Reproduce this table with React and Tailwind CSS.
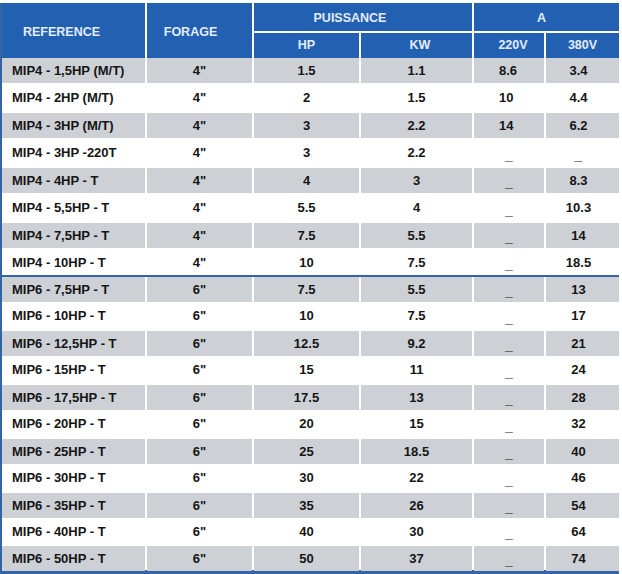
import React from 'react';

const rows = [
  ['MIP4 - 1,5HP (M/T)', '4"', '1.5', '1.1', '8.6', '3.4'],
  ['MIP4 - 2HP (M/T)', '4"', '2', '1.5', '10', '4.4'],
  ['MIP4 - 3HP (M/T)', '4"', '3', '2.2', '14', '6.2'],
  ['MIP4 - 3HP -220T', '4"', '3', '2.2', '_', '_'],
  ['MIP4 - 4HP - T', '4"', '4', '3', '_', '8.3'],
  ['MIP4 - 5,5HP - T', '4"', '5.5', '4', '_', '10.3'],
  ['MIP4 - 7,5HP - T', '4"', '7.5', '5.5', '_', '14'],
  ['MIP4 - 10HP - T', '4"', '10', '7.5', '_', '18.5'],
  ['MIP6 - 7,5HP - T', '6"', '7.5', '5.5', '_', '13'],
  ['MIP6 - 10HP - T', '6"', '10', '7.5', '_', '17'],
  ['MIP6 - 12,5HP - T', '6"', '12.5', '9.2', '_', '21'],
  ['MIP6 - 15HP - T', '6"', '15', '11', '_', '24'],
  ['MIP6 - 17,5HP - T', '6"', '17.5', '13', '_', '28'],
  ['MIP6 - 20HP - T', '6"', '20', '15', '_', '32'],
  ['MIP6 - 25HP - T', '6"', '25', '18.5', '_', '40'],
  ['MIP6 - 30HP - T', '6"', '30', '22', '_', '46'],
  ['MIP6 - 35HP - T', '6"', '35', '26', '_', '54'],
  ['MIP6 - 40HP - T', '6"', '40', '30', '_', '64'],
  ['MIP6 - 50HP - T', '6"', '50', '37', '_', '74'],
];

// row heights follow the scan: MIP4 block a bit taller than MIP6 block
const heights = [
  'h-[25px]', 'h-[26px]', 'h-[25px]', 'h-[26px]', 'h-[25px]', 'h-[26px]', 'h-[25px]', 'h-[25px]',
  'h-[24px]', 'h-[26px]', 'h-[24px]', 'h-[26px]', 'h-[24px]', 'h-[26px]', 'h-[24px]', 'h-[26px]',
  'h-[24px]', 'h-[25px]', 'h-[24px]',
];

const cols = 'grid grid-cols-[143px_105px_105px_111px_70px_73px] gap-x-[2px]';
const head = 'bg-[#2260b2] text-[#e4ecf8] text-[12.5px] font-bold flex items-center justify-center';

const Dash = () => <span className="pt-[4px] text-[14px]">_</span>;

const DataRow = ({ row, index }) => {
  const shade = index % 2 === 0 ? 'bg-[#cdd0d5]' : 'bg-white';
  const [ref, forage, hp, kw, a220, a380] = row;
  const cell = `${shade} flex items-center`;

  return (
    <div className={`${cols} ${heights[index]}`}>
      <div className={`${cell} pl-[10px]`}>{ref}</div>
      <div className={`${cell} justify-center`}>{forage}</div>
      <div className={`${cell} justify-center`}>{hp}</div>
      <div className={`${cell} justify-center`}>{kw}</div>
      {a220 === '_' ? (
        <div className={`${cell} justify-center`}><Dash /></div>
      ) : (
        <div className={`${cell} pl-[25px]`}>{a220}</div>
      )}
      <div className={`${cell} justify-center pr-[8px]`}>
        {a380 === '_' ? <Dash /> : a380}
      </div>
    </div>
  );
};

const App = () => {
  return (
    <div className="w-[622px] h-[574px] bg-white pt-[3px] font-['Liberation_Sans',Arial,sans-serif]">
      <div className="w-[619px] border-l-2 border-b-4 border-[#3464a4] text-[13px] font-bold text-[#151515]">
        {/* Header */}
        <div className={`${cols} grid-rows-[28px_25px] gap-y-[2px]`}>
          <div className={`${head} row-span-2 pt-[3px] pr-[24px]`}>REFERENCE</div>
          <div className={`${head} row-span-2 pt-[3px] pr-[18px]`}>FORAGE</div>
          <div className={`${head} col-span-2 pt-[2px] pr-[26px]`}>PUISSANCE</div>
          <div className={`${head} col-span-2 pt-[2px] pr-[10px]`}>A</div>
          <div className={head}>HP</div>
          <div className={`${head} pl-[7px]`}>KW</div>
          <div className={`${head} pl-[8px]`}>220V</div>
          <div className={head}>380V</div>
        </div>

        {/* Body */}
        <div className="flex flex-col">
          {rows.map((row, i) => (
            <React.Fragment key={row[0]}>
              {i === 8 && <div className="h-[2px] bg-[#3464a4]" />}
              <div className={i === 0 || i === 8 ? '' : 'mt-[2px]'}>
                <DataRow row={row} index={i} />
              </div>
            </React.Fragment>
          ))}
        </div>
      </div>
    </div>
  );
};

export default App;
